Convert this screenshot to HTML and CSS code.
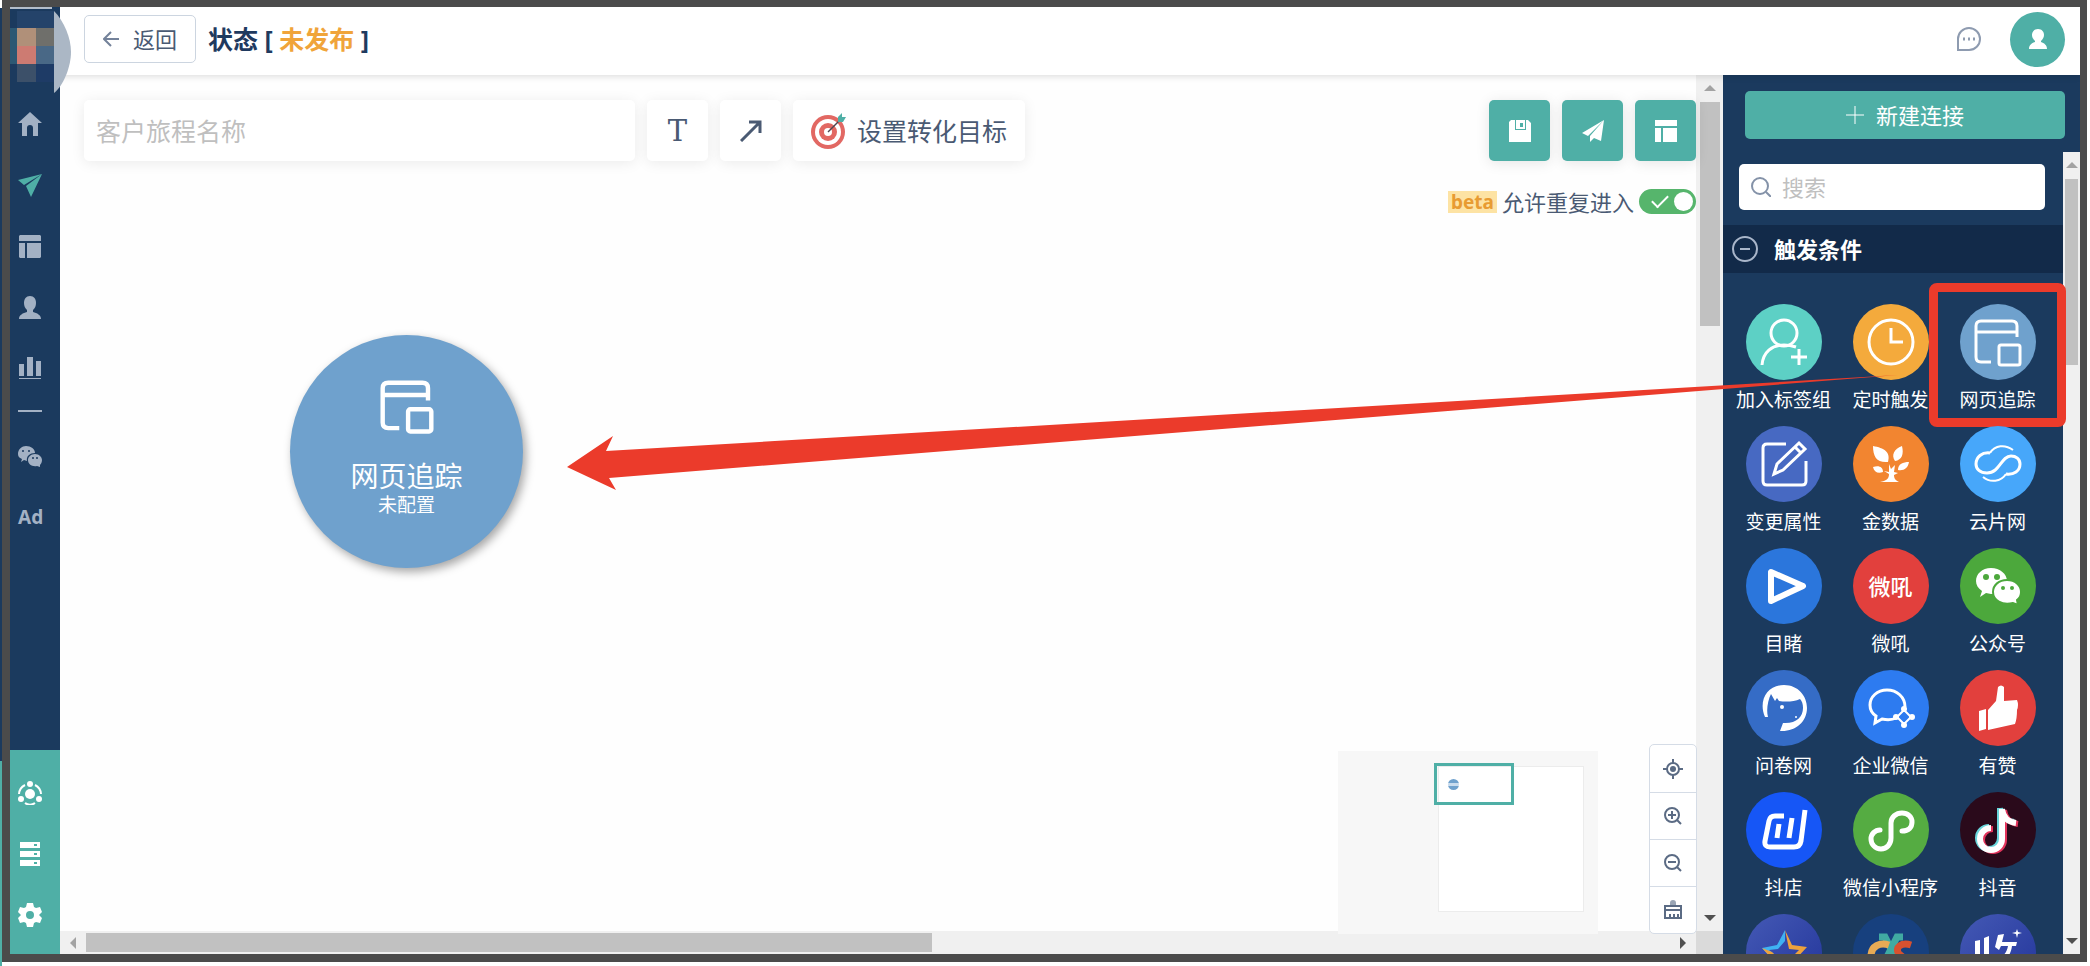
FILE: index.html
```html
<!DOCTYPE html>
<html lang="zh-CN">
<head>
    <meta charset="UTF-8">
    <meta name="viewport" content="width=device-width, initial-scale=1.0">
    <title>客户旅程</title>
    <link rel="stylesheet" href="styles.css">
</head>
<body>

<div class="frame">
    <nav class="sidebar">
        <div class="logo">
            <svg width="61" height="86" viewBox="0 0 61 86">
                <path fill="#24436a" d="M7 4h37v17H7z"/>
                <path fill="#2c5873" d="M0 21h7v36H0z"/>
                <path fill="#b09079" d="M7 21h19v18H7z"/>
                <path fill="#6f6f6b" d="M26 21h18v18H26z"/>
                <path fill="#cd7b72" d="M7 39h19v18H7z"/>
                <path fill="#496886" d="M26 39h18v18H26z"/>
                <path fill="#3c5069" d="M7 57h19v18H7z"/>
                <path fill="#1e3b66" d="M26 57h18v18H26z"/>
                <path fill="#b3bdca" d="M0 0h42v2H0z"/>
                <path fill="#abb7c5" d="M44 4c10 10 17 27 17 41S54 78 44 86z"/>
            </svg>
        </div>
        <a href="#" aria-label="首页"><svg viewBox="0 0 24 24"><path d="M12 0l12 11h-4v13h-5v-8a3 3 0 0 0-6 0v8H4V11H0z"/></svg></a>
        <a href="#" class="active" aria-label="旅程"><svg viewBox="0 0 24 24"><path d="M24 1L0 7l6 5zM24 1L8 13l5 11z"/></svg></a>
        <a href="#" aria-label="页面"><svg viewBox="0 0 24 24"><path d="M2 1h20l1 1v5H1V2zM1 9h6v15H2l-1-1zM9 9h14v14l-1 1H9z"/></svg></a>
        <a href="#" aria-label="客户"><svg viewBox="0 0 24 24"><path d="M12 1c4 0 6 3 6 7 0 3-1 5-3 7v2c4 1 8 3 8 7H1c0-4 4-6 8-7v-2C7 13 6 11 6 8c0-4 2-7 6-7z"/></svg></a>
        <a href="#" aria-label="报表"><svg viewBox="0 0 24 24"><path d="M1 8h5v12H1zM9 1h6v19H9zM18 5h5v15h-5zM1 22h22v1H1z"/></svg></a>
        <hr>
        <a href="#" aria-label="微信">
            <svg viewBox="0 0 24 24"><path d="M8 2c5 0 9 3 9 7-5 0-9 3-8 8l-3-1-3 2 1-3C1 14 0 12 0 10c0-5 4-8 8-8z"/><path d="M17 10c4 0 7 3 7 6 0 2-1 4-2 5v2l-3-1c-5 1-9-2-9-6 0-3 3-6 7-6z"/><circle class="eye" cx="5" cy="7" r="1"/><circle class="eye" cx="11" cy="7" r="1"/><circle class="eye" cx="15" cy="14" r="1"/><circle class="eye" cx="19" cy="14" r="1"/></svg>
        </a>
        <a href="#" class="ad">Ad</a>
        <div class="sidebar-bottom">
            <a href="#" aria-label="集成"><svg viewBox="0 0 24 24"><circle cx="12" cy="13" r="5"/><circle cx="12" cy="3" r="3"/><circle cx="3" cy="18" r="3"/><circle cx="21" cy="18" r="3"/><path d="M7 4a11 11 0 0 0-6 9M17 4a11 11 0 0 1 6 9M7 22c3 2 7 2 10 0" fill="none" stroke="#fff" stroke-width="2"/></svg></a>
            <a href="#" aria-label="服务"><svg viewBox="0 0 24 24"><path fill-rule="evenodd" d="M2 0h20v6H2zM16 2v2h3V2zM2 9h20v6H2zM16 11v2h3v-2zM2 18h20v6H2zM16 20v2h3v-2z"/></svg></a>
            <a href="#" aria-label="设置"><svg viewBox="0 0 24 24"><path fill-rule="evenodd" d="M9 0h6l1 4 2 1 4-1 2 5-3 3 3 3-2 5-4-1-2 1-1 4H9l-1-4-2-1-4 1-2-5 3-3-3-3 2-5 4 1 2-1zM12 8a4 4 0 1 0 0 8 4 4 0 0 0 0-8z"/></svg></a>
        </div>
    </nav>

    <div class="page">
        <header class="header">
            <button class="back"><svg width="16" height="16" viewBox="0 0 16 16"><path d="M16 8H1M8 1L1 8l7 7"/></svg>返回</button>
            <p class="status">状态 [ <span>未发布</span> ]</p>
            <button class="chat" aria-label="消息"><svg width="24" height="24" viewBox="0 0 24 24"><path d="M1 23V12A11 11 0 1 1 12 23z"/><path d="M6 12h2M11 12h2M16 12h2" stroke-width="3"/></svg></button>
            <button class="avatar" aria-label="账号"><svg width="18" height="20" viewBox="0 0 18 20"><path d="M9 0c4 0 6 3 6 6 0 2-1 4-3 6v1c3 1 6 3 6 7H0c0-4 3-6 6-7v-1C4 10 3 8 3 6c0-3 2-6 6-6z"/></svg></button>
        </header>

        <div class="content">
            <main class="workspace">
                <div class="canvas">
                    <div class="toolbar">
                        <input class="journey-name" type="text" placeholder="客户旅程名称" aria-label="客户旅程名称">
                        <button class="tool letter" aria-label="文本">T</button>
                        <button class="tool" aria-label="连线"><svg width="22" height="22" viewBox="0 0 22 22"><path d="M1 21L20 2M9 2h11v11" fill="none" stroke="#4a5a73" stroke-width="3"/></svg></button>
                        <button class="tool goal">
                            <svg width="36" height="36" viewBox="0 0 36 36"><circle cx="17" cy="19" r="17" fill="#e26863"/><circle cx="17" cy="19" r="13" fill="#fff"/><circle cx="17" cy="19" r="9" fill="#e26863"/><circle cx="17" cy="19" r="4" fill="#fff"/><path d="M17 19L29 7" stroke="#4d4450" stroke-width="1.5"/><path d="M27 9V4l4-4v4h4l-3 5z" fill="#4fafa6"/></svg>
                            设置转化目标
                        </button>
                        <div class="actions">
                            <button aria-label="保存"><svg viewBox="0 0 22 22"><path fill-rule="evenodd" d="M2 0h4v10h11V0h2l3 3v19H0V2zM7 0h9v9H7zm4 3v4h3V3z"/></svg></button>
                            <button aria-label="发布"><svg viewBox="0 0 22 22"><path d="M22 0L0 13l6 3zM22 0L8 16v6l4-4 7 3z"/></svg></button>
                            <button aria-label="模板"><svg viewBox="0 0 22 22"><path d="M0 0h22v6H0zM0 8h6v14H0zM8 8h14v14H8z"/></svg></button>
                        </div>
                    </div>
                    <div class="repeat">
                        <span class="beta">beta</span>
                        <label for="repeat">允许重复进入</label>
                        <input id="repeat" class="switch" type="checkbox" checked>
                    </div>

                    <div class="node">
                        <svg width="76" height="76" viewBox="0 0 76 76"><path d="M57 33V22q0-5-5-5H21q-5 0-5 5v31q0 5 5 5h10M16 28h41"/><rect x="39" y="41" width="21" height="20" rx="2"/></svg>
                        <strong>网页追踪</strong>
                        <span>未配置</span>
                    </div>
                </div>
                <div class="vbar"><i class="up"></i><div class="thumb"></div><i class="down"></i></div>
                <div class="hbar"><i class="left"></i><div class="thumb"></div><i class="right"></i></div>
                <div class="corner"></div>

                <div class="minimap">
                    <div class="map-area"></div>
                    <div class="map-view"><span></span></div>
                </div>
                <div class="zoom">
                    <button aria-label="定位"><svg viewBox="0 0 20 20"><circle cx="10" cy="10" r="6"/><circle cx="10" cy="10" r="3" fill="#5b6b84" stroke="none"/><path d="M10 0v4M10 16v4M0 10h4M16 10h4"/></svg></button>
                    <button aria-label="放大"><svg viewBox="0 0 20 20"><circle cx="9" cy="9" r="7"/><path d="M14 14l4 4M5 9h8M9 5v8"/></svg></button>
                    <button aria-label="缩小"><svg viewBox="0 0 20 20"><circle cx="9" cy="9" r="7"/><path d="M14 14l4 4M5 9h8"/></svg></button>
                    <button aria-label="清空"><svg viewBox="0 0 20 20"><path d="M7 6V3a3 3 0 0 1 6 0v3z" fill="#9aa5b5" stroke="none"/><path d="M2 6h16v12H2zM2 10h16M7 18v-4M11 18v-4M15 18v-4"/></svg></button>
                </div>
            </main>

            <aside class="panel">
                <button class="new-link"><svg width="18" height="18" viewBox="0 0 18 18"><path d="M9 0v18M0 9h18" stroke="#fff"/></svg>新建连接</button>
                <div class="panel-scroll">
                    <div class="panel-list">
                        <div class="search">
                            <svg width="20" height="20" viewBox="0 0 20 20"><circle cx="9" cy="9" r="8"/><path d="M15 15l5 5"/></svg>
                            <input type="search" placeholder="搜索" aria-label="搜索">
                        </div>
                        <h2><svg width="26" height="26" viewBox="0 0 26 26"><circle cx="13" cy="13" r="12"/><path d="M8 13h10"/></svg>触发条件</h2>
                        <div class="items">
                            <button class="item">
                                <svg class="line c-teal" viewBox="0 0 76 76"><circle cx="38" cy="29" r="13"/><path d="M16 61c1-13 10-20 22-20 5 0 9 1 12 2M53 45v16M45 53h16"/></svg>
                                加入标签组
                            </button>
                            <button class="item">
                                <svg class="line c-amber" viewBox="0 0 76 76"><circle cx="38" cy="38" r="22"/><path d="M38 24v14h12"/></svg>
                                定时触发
                            </button>
                            <button class="item picked">
                                <svg class="line c-steel" viewBox="0 0 76 76"><path d="M57 33V22q0-5-5-5H21q-5 0-5 5v31q0 5 5 5h10M16 28h41"/><rect x="39" y="41" width="21" height="20" rx="2"/></svg>
                                网页追踪
                            </button>
                            <button class="item">
                                <svg class="line c-indigo" viewBox="0 0 76 76"><path d="M40 18H21q-4 0-4 4v33q0 4 4 4h35q4 0 4-4V35M28 48l3-10 22-21 6 6-22 21zM49 21l6 6"/></svg>
                                变更属性
                            </button>
                            <button class="item">
                                <svg class="c-orange" viewBox="0 0 76 76"><path d="M20 20c11 2 18 6 15 16-11 1-15-5-15-16zM49 20c2 8 0 14-7 15-4-6-1-12 7-15zM20 41c6-2 10 0 10 5-5 2-9 0-10-5zM56 36c-1 6-5 9-11 8 0-6 5-8 11-8zM36 38l2 5 4-4-1 7 4 1-4 2c0 3 1 5 5 7H27c6-1 9-3 9-8l-5-3 5 1z"/></svg>
                                金数据
                            </button>
                            <button class="item">
                                <svg class="line c-sky" viewBox="0 0 76 76"><path stroke-width="2" d="M30 27c5-8 15-9 23-3M46 48c-5 8-16 9-23 3"/><path d="M30 27c-8-1-14 4-14 11 0 5 4 9 11 9 13 0 14-17 24-17 5 0 9 3 9 8 0 7-6 11-14 10"/></svg>
                                云片网
                            </button>
                            <button class="item">
                                <svg class="c-blue" viewBox="0 0 76 76"><path d="M25 24v29l32-15z" fill="none" stroke="#fff" stroke-width="6" stroke-linejoin="round"/></svg>
                                目睹
                            </button>
                            <button class="item">
                                <span class="word c-red">微吼</span>
                                微吼
                            </button>
                            <button class="item">
                                <svg class="c-green" viewBox="0 0 76 76"><path d="M31 20c9 0 16 6 16 13s-7 13-16 13l-5-1-6 4 2-6c-4-3-6-6-6-10 0-7 6-13 15-13z"/><path d="M47 32c8 0 14 5 14 12 0 3-1 6-4 8l1 5-5-2c-11 3-20-3-20-11 0-7 6-12 14-12z" stroke="#4ca83c" stroke-width="2"/><g fill="#4ca83c"><circle cx="26" cy="29" r="3"/><circle cx="37" cy="29" r="3"/><circle cx="43" cy="40" r="2"/><circle cx="52" cy="40" r="2"/></g></svg>
                                公众号
                            </button>
                            <button class="item">
                                <svg class="c-denim" viewBox="0 0 76 76"><path d="M19 47C12 31 21 15 38 15c14 0 23 11 23 23 0 14-12 24-27 23l3-8c13 1 20-6 20-15 0-4-1-7-3-9-6 3-15 3-21 2l-2-3-2 3-4-7c-3 6-5 16-3 23z"/><circle cx="36" cy="37" r="2"/><circle cx="50" cy="47" r="1"/></svg>
                                问卷网
                            </button>
                            <button class="item">
                                <svg class="line c-azure" viewBox="0 0 76 76"><path d="M52 37c0-10-8-17-18-17s-17 7-17 15c0 6 3 9 6 11l-1 7 7-4c5 1 10 1 14-1"/><path stroke-width="2" d="M51 40l7 7-7 7-7-7z"/><g fill="#fff" stroke="none"><circle cx="51" cy="39" r="3"/><circle cx="51" cy="55" r="3"/><circle cx="43" cy="47" r="3"/><circle cx="59" cy="47" r="3"/></g></svg>
                                企业微信
                            </button>
                            <button class="item">
                                <svg class="c-red" viewBox="0 0 76 76"><path d="M19 41l7-2v20l-7 2zM28 40l8-9 2-14q3-3 6 0v14l13-1q2 5 0 10 0 9-2 14l-27 6z"/></svg>
                                有赞
                            </button>
                            <button class="item">
                                <svg class="c-royal" viewBox="0 0 76 76"><g fill="none" stroke="#fff" stroke-width="5"><path d="M38 24h-9q-5 0-6 5l-4 20q-1 6 5 6h24q6 0 7-6l4-31"/><path d="M33 32l-2 14M46 26l-3 20"/></g></svg>
                                抖店
                            </button>
                            <button class="item">
                                <svg class="c-leaf" viewBox="0 0 76 76"><path d="M49 39c7 0 10-4 10-9s-4-9-10-9-11 4-11 10v15c0 6-4 11-10 11s-10-5-10-10 4-9 9-9" fill="none" stroke="#fff" stroke-width="5" stroke-linecap="round"/></svg>
                                微信小程序
                            </button>
                            <button class="item">
                                <svg class="c-plum" viewBox="0 0 76 76"><g fill="none" stroke-width="6"><path stroke="#69d5db" d="M40 16v30a11 11 0 1 1-11-11M40 16c1 8 6 13 14 14"/><path stroke="#e2345c" d="M44 18v30a11 11 0 1 1-11-11M44 18c1 8 6 13 14 14"/><path stroke="#fff" d="M42 17v30a11 11 0 1 1-11-11M42 17c1 8 6 13 14 14"/></g></svg>
                                抖音
                            </button>
                            <button class="item" aria-label="星标">
                                <svg class="c-night" viewBox="0 0 76 76"><path fill="#3fb2f2" d="M39 16v11l-7 8-9 1 11 9-4 14 5-3-2 7-8 3 2-20-11-12 15-3z"/><path fill="#eda23c" d="M39 16l7 15 15 2-12 13 3 19-14-8v-6l9 5-2-12 8-8-10-1zM16 34l10 4 7 7-5 2z"/></svg>
                            </button>
                            <button class="item" aria-label="营销">
                                <svg class="c-navy" viewBox="0 0 76 76"><g fill="none" stroke-width="7"><path stroke="#40aaa2" d="M26 23h6l12 24M50 23h-6L32 47"/><path stroke="#e8ab55" d="M36 31c-9-3-18 1-18 11"/><path stroke="#d7512f" d="M58 31c-9-3-17 2-12 9l5 4"/></g></svg>
                            </button>
                            <button class="item" aria-label="收款">
                                <svg class="c-night" viewBox="0 0 76 76"><path d="M15 27l5-1v22h-5zM24 24l5-2v30h-5zM38 21l6-1-2 8h15l-1 4h-4c-1 8-5 13-11 17l-3-4c6-3 9-7 10-13h-7l-2 4-4-3zM57 15l1 3 4 1-4 1-1 4-1-4-4-1 4-1z"/></svg>
                            </button>
                        </div>
                    </div>
                    <div class="vbar"><i class="up"></i><div class="thumb"></div><i class="down"></i></div>
                </div>
            </aside>
        </div>
    </div>

    <!-- drag hint from the trigger list to the node -->
    <svg class="hint" width="1340" height="120" viewBox="0 0 1340 120"><path fill="#eb3b2b" d="M0 92l46-31-7 15L1331 0 42 103l7 12z"/></svg>
</div>

</body>
</html>
```

FILE: styles.css
```css
* {
    box-sizing: border-box;
}
body {
    margin: 0;
    font-family: "Noto Sans", "Noto Sans CJK SC", sans-serif;
    font-size: 22px;
    line-height: 24px;
    color: #4a5a73;
    background: linear-gradient(#1b3a5e 78%, #4fafa6 78%) 0 8px / 2px 100% no-repeat;
}
button {
    font: inherit;
    color: inherit;
    padding: 0;
    border: none;
    background: none;
    cursor: pointer;
}
input {
    font: inherit;
    color: inherit;
}
input::placeholder {
    color: #bfbfbf;
    opacity: 1;
}
svg {
    flex: none;
}
.frame {
    position: relative;
    display: flex;
    height: calc(100vh - 4px);
    margin: 0 3px 4px 2px;
    border: solid #4b4b4b;
    border-width: 7px 7px 8px 8px;
    overflow: hidden;
    background: #fff;
}

/* sidebar */
.sidebar {
    display: flex;
    flex-direction: column;
    flex: none;
    width: 50px;
    background: #1b3a5e;
    z-index: 3;
}
.logo {
    height: 86px;
}
.logo svg {
    display: block;
}
.sidebar a {
    display: flex;
    align-items: center;
    height: 61px;
    padding-left: 8px;
    color: #a3b1c4;
    text-decoration: none;
}
.sidebar a svg {
    width: 24px;
    height: 24px;
    fill: currentColor;
}
.sidebar a.active {
    color: #4fafa6;
}
.sidebar .eye {
    fill: #1b3a5e;
}
.sidebar hr {
    width: 24px;
    margin: 12px 8px 13px;
    border: none;
    border-top: 2px solid #a3b1c4;
}
.sidebar .ad {
    font-weight: bold;
    font-size: 19px;
}
.sidebar-bottom {
    margin-top: auto;
    padding: 12px 0 9px;
    background: #4fafa6;
}
.sidebar .sidebar-bottom a {
    color: #fff;
}

/* header */
.page {
    display: flex;
    flex-direction: column;
    flex: 1;
    min-width: 0;
}
.header {
    display: flex;
    align-items: center;
    flex: none;
    height: 68px;
    padding: 0 15px 4px 24px;
    background: #fff;
    box-shadow: 0 2px 6px rgba(0, 0, 0, 0.12);
    z-index: 1;
}
.back {
    display: flex;
    align-items: center;
    justify-content: center;
    gap: 14px;
    width: 112px;
    height: 48px;
    border: 1px solid #ccd5e0;
    border-radius: 5px;
}
.back svg {
    fill: none;
    stroke: #74829a;
    stroke-width: 2;
}
.status {
    margin: 0 auto 0 12px;
    font-size: 25px;
    font-weight: bold;
    color: #1f3a5f;
}
.status span {
    color: #f0a43a;
}
.chat {
    display: flex;
    margin-right: 29px;
}
.chat svg {
    fill: none;
    stroke: #8e9bb0;
    stroke-width: 2;
}
.avatar {
    display: flex;
    align-items: center;
    justify-content: center;
    width: 55px;
    height: 55px;
    border-radius: 50%;
    background: #4fafa6;
}
.avatar svg {
    fill: #fff;
}

/* workspace */
.content {
    display: flex;
    flex: 1;
    min-height: 0;
}
.workspace {
    position: relative;
    display: grid;
    grid-template-columns: 1fr 27px;
    grid-template-rows: 1fr 23px;
    flex: 1;
    min-width: 0;
}
.canvas {
    position: relative;
    padding: 25px 0 0 24px;
    background: #fefefe;
}
.toolbar {
    display: flex;
    gap: 12px;
    height: 61px;
}
.journey-name {
    flex: 0 1 551px;
    min-width: 0;
    padding: 0 12px;
    font-size: 25px;
    border: none;
    border-radius: 5px;
    background: #fff;
    box-shadow: 0 2px 14px rgba(0, 0, 0, 0.08);
}
.tool {
    display: flex;
    align-items: center;
    justify-content: center;
    flex: none;
    width: 61px;
    border-radius: 5px;
    background: #fff;
    box-shadow: 0 2px 14px rgba(0, 0, 0, 0.08);
}
.tool.letter {
    font-family: "DejaVu Serif", serif;
    font-size: 29px;
}
.tool.goal {
    width: 232px;
    gap: 10px;
    font-size: 25px;
}
.actions {
    display: flex;
    gap: 12px;
    margin-left: auto;
}
.actions button {
    display: flex;
    align-items: center;
    justify-content: center;
    width: 61px;
    border-radius: 5px;
    background: #4fafa6;
    box-shadow: 0 2px 14px rgba(0, 0, 0, 0.1);
}
.actions svg {
    width: 22px;
    height: 22px;
    fill: #fff;
}
.repeat {
    display: flex;
    align-items: center;
    justify-content: flex-end;
    gap: 5px;
    margin-top: 28px;
}
.beta {
    padding: 0 3px;
    font-size: 19px;
    font-weight: bold;
    line-height: 22px;
    color: #e89b32;
    background: #fde3a4;
}
.switch {
    appearance: none;
    display: flex;
    align-items: center;
    justify-content: space-between;
    width: 57px;
    height: 25px;
    margin: 0;
    padding: 0 3px 0 13px;
    border-radius: 13px;
    background: #56b56c;
}
.switch::before {
    content: "";
    width: 14px;
    height: 7px;
    margin-bottom: 5px;
    border: solid #fff;
    border-width: 0 0 2px 2px;
    transform: rotate(-45deg);
}
.switch::after {
    content: "";
    width: 19px;
    height: 19px;
    border-radius: 50%;
    background: #fff;
}
.node {
    position: absolute;
    left: 230px;
    top: 260px;
    display: flex;
    flex-direction: column;
    align-items: center;
    width: 233px;
    height: 233px;
    padding-top: 29px;
    border-radius: 50%;
    color: #fff;
    background: #6fa1cd;
    box-shadow: 3px 4px 10px rgba(0, 0, 0, 0.35);
}
.node svg {
    width: 84px;
    height: 84px;
    fill: none;
    stroke: #fff;
    stroke-width: 4;
}
.node strong {
    margin-top: 11px;
    font-size: 28px;
    font-weight: normal;
    line-height: 34px;
}
.node span {
    font-size: 19px;
}

/* scroll bars */
.vbar {
    display: flex;
    flex-direction: column;
    flex: none;
    align-items: center;
    background: #f0f0f0;
}
.vbar .thumb {
    width: 20px;
    height: 224px;
    margin-bottom: auto;
    background: #c1c1c1;
}
.hbar {
    display: flex;
    align-items: center;
    background: #f0f0f0;
}
.hbar .thumb {
    width: calc(52% - 5px);
    height: 19px;
    margin-right: auto;
    background: #c1c1c1;
}
.up, .down, .left, .right {
    border: 6px solid transparent;
}
.up {
    margin: 4px 0 11px;
    border-bottom-color: #a3a3a3;
}
.down {
    margin-bottom: 4px;
    border-top-color: #505050;
}
.left {
    margin: 0 10px 0 4px;
    border-right-color: #a3a3a3;
}
.right {
    margin-right: 4px;
    border-left-color: #505050;
}
.corner {
    background: #dadada;
}

/* minimap */
.minimap {
    position: absolute;
    right: 125px;
    bottom: 20px;
    width: 260px;
    height: 183px;
    padding: 15px 14px 0 0;
    background: #f7f7f7;
}
.map-area {
    width: 146px;
    height: 146px;
    margin-left: auto;
    border: 1px solid #ececec;
    background: #fff;
}
.map-view {
    position: absolute;
    left: 96px;
    top: 12px;
    width: 80px;
    height: 42px;
    padding: 13px 11px;
    border: 3px solid #4fafa6;
}
.map-view span {
    display: block;
    width: 11px;
    height: 11px;
    border-radius: 50%;
    background: linear-gradient(#6fa1cd 40%, #c9dcee 40%, #c9dcee 60%, #6fa1cd 60%);
}
.zoom {
    position: absolute;
    right: 26px;
    bottom: 20px;
    width: 48px;
    border: 1px solid #d5dce6;
    border-radius: 5px;
    background: #fff;
}
.zoom button {
    display: flex;
    align-items: center;
    justify-content: center;
    width: 100%;
    height: 47px;
}
.zoom button + button {
    border-top: 1px solid #d5dce6;
}
.zoom svg {
    width: 20px;
    height: 20px;
    fill: none;
    stroke: #5b6b84;
    stroke-width: 2;
}

/* right panel */
.panel {
    display: flex;
    flex-direction: column;
    flex: none;
    width: 357px;
    color: #fff;
    background: #1b3a5e;
}
.new-link {
    display: flex;
    align-items: center;
    justify-content: center;
    flex: none;
    gap: 12px;
    height: 48px;
    margin: 16px 15px 13px 22px;
    border-radius: 5px;
    background: #4fafa6;
}
.panel-scroll {
    display: flex;
    flex: 1;
    min-height: 0;
    overflow: hidden;
}
.panel-list {
    flex: 1;
    min-width: 0;
}
.panel-scroll .vbar {
    width: 17px;
}
.panel-scroll .thumb {
    width: 13px;
    height: 186px;
}
.search {
    display: flex;
    align-items: center;
    gap: 11px;
    height: 46px;
    margin: 12px 18px 15px 16px;
    padding: 0 12px;
    border-radius: 5px;
    background: #fff;
}
.search svg {
    fill: none;
    stroke: #8492a8;
    stroke-width: 2;
}
.search input {
    flex: 1;
    min-width: 0;
    padding: 0;
    border: none;
    outline: none;
    color: #4a5a73;
    background: none;
}
.panel h2 {
    display: flex;
    align-items: center;
    gap: 16px;
    height: 48px;
    margin: 0;
    padding-left: 9px;
    font-size: 22px;
    background: #122a49;
}
.panel h2 svg {
    fill: none;
    stroke: #a9b6ca;
    stroke-width: 2;
}
.items {
    display: grid;
    grid-template-columns: repeat(3, minmax(0, 1fr));
    row-gap: 14px;
    padding: 31px 12px 0 7px;
}
.item {
    position: relative;
    display: flex;
    flex-direction: column;
    align-items: center;
    gap: 8px;
    font-size: 19px;
    white-space: nowrap;
}
.item svg, .word {
    width: 76px;
    height: 76px;
    border-radius: 50%;
    fill: #fff;
}
.item svg.line {
    fill: none;
    stroke: #fff;
    stroke-width: 3;
}
.word {
    display: flex;
    align-items: center;
    justify-content: center;
    font-size: 22px;
    font-weight: 500;
}
.picked::after {
    content: "";
    position: absolute;
    inset: -21px -15px -15px;
    border: 9px solid #eb3b2b;
    border-radius: 8px;
}
.c-teal { background: #5dd0c5; }
.c-amber { background: #f4aa3c; }
.c-steel { background: #6fa1cd; }
.c-indigo { background: #4769c2; }
.c-orange { background: #f28530; }
.c-sky { background: #47a7fa; }
.c-blue { background: #2b76dc; }
.c-red { background: #e2403d; }
.c-green { background: #4ca83c; }
.c-denim { background: #356cc6; }
.c-azure { background: #2d7bf0; }
.c-royal { background: #1656f6; }
.c-leaf { background: #55ac42; }
.c-plum { background: #2a0a1b; }
.c-night { background: linear-gradient(135deg, #4459b5, #23359a); }
.c-navy { background: #17407e; }

.hint {
    position: absolute;
    left: 557px;
    top: 368px;
    pointer-events: none;
    z-index: 4;
}
```
